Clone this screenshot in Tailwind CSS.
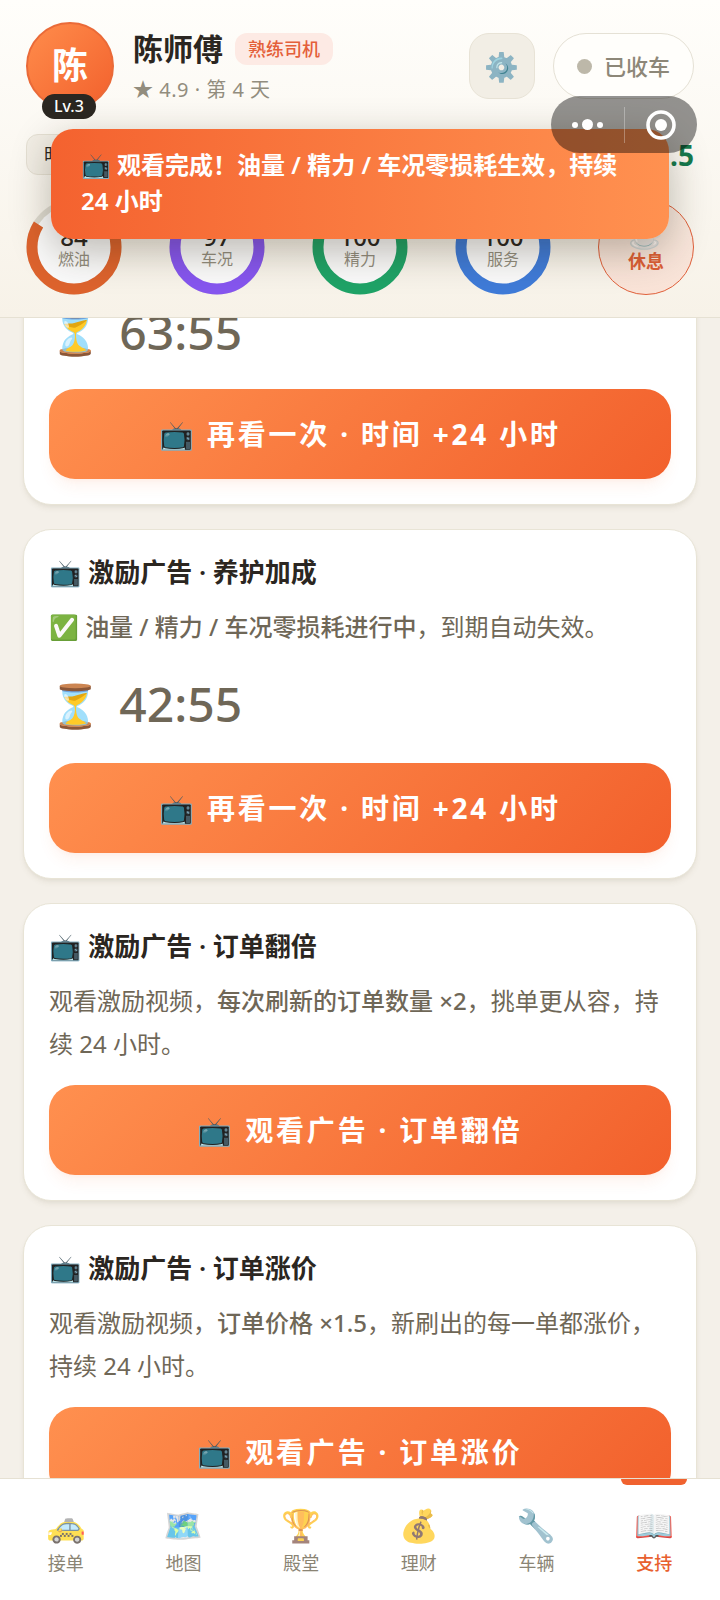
<!DOCTYPE html>
<html lang="zh-CN">
	<head>
		<meta charset="UTF-8" />
		<meta name="viewport" content="width=device-width, initial-scale=1.0" />
		<title>陈师傅</title>
		<script src="https://cdn.jsdelivr.net/npm/@tailwindcss/browser@4"></script>
	</head>
	<body
		class="relative flex h-screen flex-col overflow-hidden bg-[#f4f0e9] font-['Noto_Sans','Noto_Sans_CJK_SC','Noto_Color_Emoji',sans-serif] text-[#2b2621]"
	>
		<!-- header -->
		<header
			class="flex flex-col border-b border-[#e6e1d3] bg-linear-to-b from-[#fffefb] to-[#f7f2e8] px-[26px] pt-[22px] pb-[22px]"
		>
			<div class="flex items-start justify-between">
				<div class="flex gap-[19px]">
					<div class="relative">
						<div
							class="flex size-[88px] items-center justify-center rounded-full border-2 border-[#ea6a38] bg-linear-to-br from-[#ff8c4b] to-[#f2602c] text-4xl font-bold text-white"
						>
							陈
						</div>
						<span
							class="absolute top-[72px] left-4 rounded-full bg-[#2b2721] px-3 text-base leading-[25px] font-medium text-white"
							>Lv.3</span
						>
					</div>
					<div class="pt-[7px]">
						<div class="flex items-center gap-3">
							<h1 class="text-[30px] leading-10 font-semibold">陈师傅</h1>
							<span
								class="rounded-xl bg-[#fdeae4] px-[13px] text-lg leading-8 font-medium text-[#e4603a]"
								>熟练司机</span
							>
						</div>
						<p class="mt-[5px] text-xl leading-8 tracking-wide text-[#928d7e]">★ 4.9 · 第 4 天</p>
					</div>
				</div>
				<div class="flex gap-[18px] pt-[11px]">
					<button
						aria-label="设置"
						class="flex size-[66px] items-center justify-center rounded-[20px] border border-[#e8e3d6] bg-[#f2eee5] text-[28px]"
					>
						<span class="opacity-90">⚙️</span>
					</button>
					<button
						class="flex h-[66px] items-center gap-3 rounded-full border border-[#e5e1d5] bg-[#fffefb] px-[23px] text-[22px] font-medium text-[#8d8778]"
					>
						<span class="size-[15px] rounded-full bg-[#bdb8a9]"></span>已收车
					</button>
				</div>
			</div>

			<div class="mt-6 flex h-[41px] items-center justify-between">
				<span
					class="rounded-xl border border-[#e5e0d3] bg-[#f2eee5] px-[17px] text-lg leading-[39px]"
					>时</span
				>
				<span class="text-[28px] font-bold text-[#157a4e]">.5</span>
			</div>

			<!-- status rings -->
			<div class="mt-6 flex justify-between">
				<div class="relative size-24">
					<svg class="size-24 -rotate-90" viewBox="0 0 96 96" fill="#fafafa">
						<circle cx="48" cy="48" r="42" stroke="#dedbd1" stroke-width="11" />
						<circle cx="48" cy="48" r="42" stroke="#dd632d" stroke-width="11" pathLength="100" stroke-dasharray="84 100" />
					</svg>
					<div class="absolute inset-0 flex flex-col items-center pt-[26px]">
						<b class="text-2xl leading-6 font-medium">84</b>
						<span class="text-base leading-5 text-[#928d7e]">燃油</span>
					</div>
				</div>
				<div class="relative size-24">
					<svg class="size-24 -rotate-90" viewBox="0 0 96 96" fill="#fafafa">
						<circle cx="48" cy="48" r="42" stroke="#dedbd1" stroke-width="11" />
						<circle cx="48" cy="48" r="42" stroke="#8656ef" stroke-width="11" pathLength="100" stroke-dasharray="97 100" />
					</svg>
					<div class="absolute inset-0 flex flex-col items-center pt-[26px]">
						<b class="text-2xl leading-6 font-medium">97</b>
						<span class="text-base leading-5 text-[#928d7e]">车况</span>
					</div>
				</div>
				<div class="relative size-24">
					<svg class="size-24" viewBox="0 0 96 96" fill="#fafafa">
						<circle cx="48" cy="48" r="42" stroke="#1fa367" stroke-width="11" />
					</svg>
					<div class="absolute inset-0 flex flex-col items-center pt-[26px]">
						<b class="text-2xl leading-6 font-medium">100</b>
						<span class="text-base leading-5 text-[#928d7e]">精力</span>
					</div>
				</div>
				<div class="relative size-24">
					<svg class="size-24" viewBox="0 0 96 96" fill="#fafafa">
						<circle cx="48" cy="48" r="42" stroke="#3f7bd8" stroke-width="11" />
					</svg>
					<div class="absolute inset-0 flex flex-col items-center pt-[26px]">
						<b class="text-2xl leading-6 font-medium">100</b>
						<span class="text-base leading-5 text-[#928d7e]">服务</span>
					</div>
				</div>
				<button
					class="flex size-24 flex-col items-center rounded-full border border-[#e0603a] bg-linear-to-b from-[#f8e9df] to-[#fae3d7] pt-[17px]"
				>
					<span class="text-[28px] leading-8 opacity-70">☕</span>
					<span class="text-lg leading-6 font-bold text-[#dd5f36]">休息</span>
				</button>
			</div>
		</header>

		<!-- ad cards -->
		<main class="flex-1 overflow-hidden">
			<div class="-mt-[34px] flex flex-col gap-6 px-[23px]">
				<section
					class="rounded-b-[28px] border border-[#e8e4d6] bg-white px-[25px] pb-[25px] shadow-md shadow-[#5a4a20]/8"
				>
					<div class="flex h-[104px] items-start gap-[18px] pt-[8px] text-[#6f6757]">
						<span class="text-[42px] leading-[78px]">⏳</span>
						<span class="text-5xl leading-[78px] font-medium">63:55</span>
					</div>
					<button
						class="h-[90px] w-full rounded-[26px] bg-linear-[135deg] from-[#ff904f] to-[#f2602c] text-[28px] font-bold tracking-widest text-white shadow-lg shadow-[#f2602c]/8"
					>
						📺 再看一次 · 时间 +24 小时
					</button>
				</section>

				<section
					class="rounded-[28px] border border-[#e8e4d6] bg-white p-[25px] shadow-md shadow-[#5a4a20]/8"
				>
					<h2 class="text-[26px] leading-[34px] font-semibold">📺 激励广告 · 养护加成</h2>
					<p class="mt-4 text-2xl leading-[43px] text-[#6f6757]">
						✅ <b class="font-medium">油量 / 精力 / 车况零损耗进行中</b>，到期自动失效。
					</p>
					<div class="mt-[17px] flex h-[78px] items-center gap-[18px] text-[#6f6757]">
						<span class="text-[42px]">⏳</span>
						<span class="text-5xl font-medium">42:55</span>
					</div>
					<button
						class="mt-5 h-[90px] w-full rounded-[26px] bg-linear-[135deg] from-[#ff904f] to-[#f2602c] text-[28px] font-bold tracking-widest text-white shadow-lg shadow-[#f2602c]/8"
					>
						📺 再看一次 · 时间 +24 小时
					</button>
				</section>

				<section
					class="rounded-[28px] border border-[#e8e4d6] bg-white p-[25px] shadow-md shadow-[#5a4a20]/8"
				>
					<h2 class="text-[26px] leading-[34px] font-semibold">📺 激励广告 · 订单翻倍</h2>
					<p class="mt-4 text-2xl leading-[43px] text-[#6f6757]">
						观看激励视频，<b class="font-medium">每次刷新的订单数量 ×2</b>，挑单更从容，持续 24 小时。
					</p>
					<button
						class="mt-5 h-[90px] w-full rounded-[26px] bg-linear-[135deg] from-[#ff904f] to-[#f2602c] text-[28px] font-bold tracking-widest text-white shadow-lg shadow-[#f2602c]/8"
					>
						📺 观看广告 · 订单翻倍
					</button>
				</section>

				<section
					class="rounded-[28px] border border-[#e8e4d6] bg-white p-[25px] shadow-md shadow-[#5a4a20]/8"
				>
					<h2 class="text-[26px] leading-[34px] font-semibold">📺 激励广告 · 订单涨价</h2>
					<p class="mt-4 text-2xl leading-[43px] text-[#6f6757]">
						观看激励视频，<b class="font-medium">订单价格 ×1.5</b>，新刷出的每一单都涨价，持续 24 小时。
					</p>
					<button
						class="mt-5 h-[90px] w-full rounded-[26px] bg-linear-[135deg] from-[#ff904f] to-[#f2602c] text-[28px] font-bold tracking-widest text-white shadow-lg shadow-[#f2602c]/8"
					>
						📺 观看广告 · 订单涨价
					</button>
				</section>
			</div>
		</main>

		<!-- tab bar -->
		<nav
			class="grid h-[122px] grid-cols-6 border-t border-[#e6e1d3] bg-white px-[7px] text-lg leading-6 text-[#8a8474]"
		>
			<a href="#" class="flex flex-col items-center gap-[6px] pt-[26px]">
				<span class="text-[32px] leading-10 opacity-75">🚕</span>接单
			</a>
			<a href="#" class="flex flex-col items-center gap-[6px] pt-[26px]">
				<span class="text-[32px] leading-10 opacity-75">🗺️</span>地图
			</a>
			<a href="#" class="flex flex-col items-center gap-[6px] pt-[26px]">
				<span class="text-[32px] leading-10 opacity-75">🏆</span>殿堂
			</a>
			<a href="#" class="flex flex-col items-center gap-[6px] pt-[26px]">
				<span class="text-[32px] leading-10 opacity-75">💰</span>理财
			</a>
			<a href="#" class="flex flex-col items-center gap-[6px] pt-[26px]">
				<span class="text-[32px] leading-10 opacity-75">🔧</span>车辆
			</a>
			<a href="#" class="flex flex-col items-center gap-[6px] font-medium text-[#e8602f]">
				<span class="mb-[14px] h-[6px] w-[66px] rounded-b-md bg-[#f0622f]"></span>
				<span class="text-[32px] leading-10 opacity-90">📖</span>支持
			</a>
		</nav>

		<!-- toast -->
		<div
			role="status"
			class="absolute inset-x-[51px] top-[129px] rounded-[22px] bg-linear-to-r from-[#f4622f] to-[#ff9150] px-[30px] pt-[18px] pb-5 text-2xl leading-9 font-semibold text-white shadow-[0_12px_40px_rgba(40,30,10,0.3)]"
		>
			📺 观看完成！油量 / 精力 / 车况零损耗生效，持续 24 小时
		</div>

		<!-- mini program capsule -->
		<div
			class="absolute top-24 right-[23px] flex h-[57px] w-[146px] items-center rounded-full bg-black/42"
		>
			<button aria-label="更多" class="flex flex-1 items-center justify-center gap-[4px]">
				<span class="size-[6px] rounded-full bg-white"></span>
				<span class="size-[11px] rounded-full bg-white"></span>
				<span class="size-[6px] rounded-full bg-white"></span>
			</button>
			<span class="h-9 w-px bg-white/30"></span>
			<button aria-label="关闭" class="flex flex-1 items-center justify-center">
				<svg class="size-[30px]" viewBox="0 0 30 30">
					<circle cx="15" cy="15" r="13" fill="none" stroke="#fff" stroke-width="3.6" />
					<circle cx="15" cy="15" r="6" fill="#fff" />
				</svg>
			</button>
		</div>
	</body>
</html>
